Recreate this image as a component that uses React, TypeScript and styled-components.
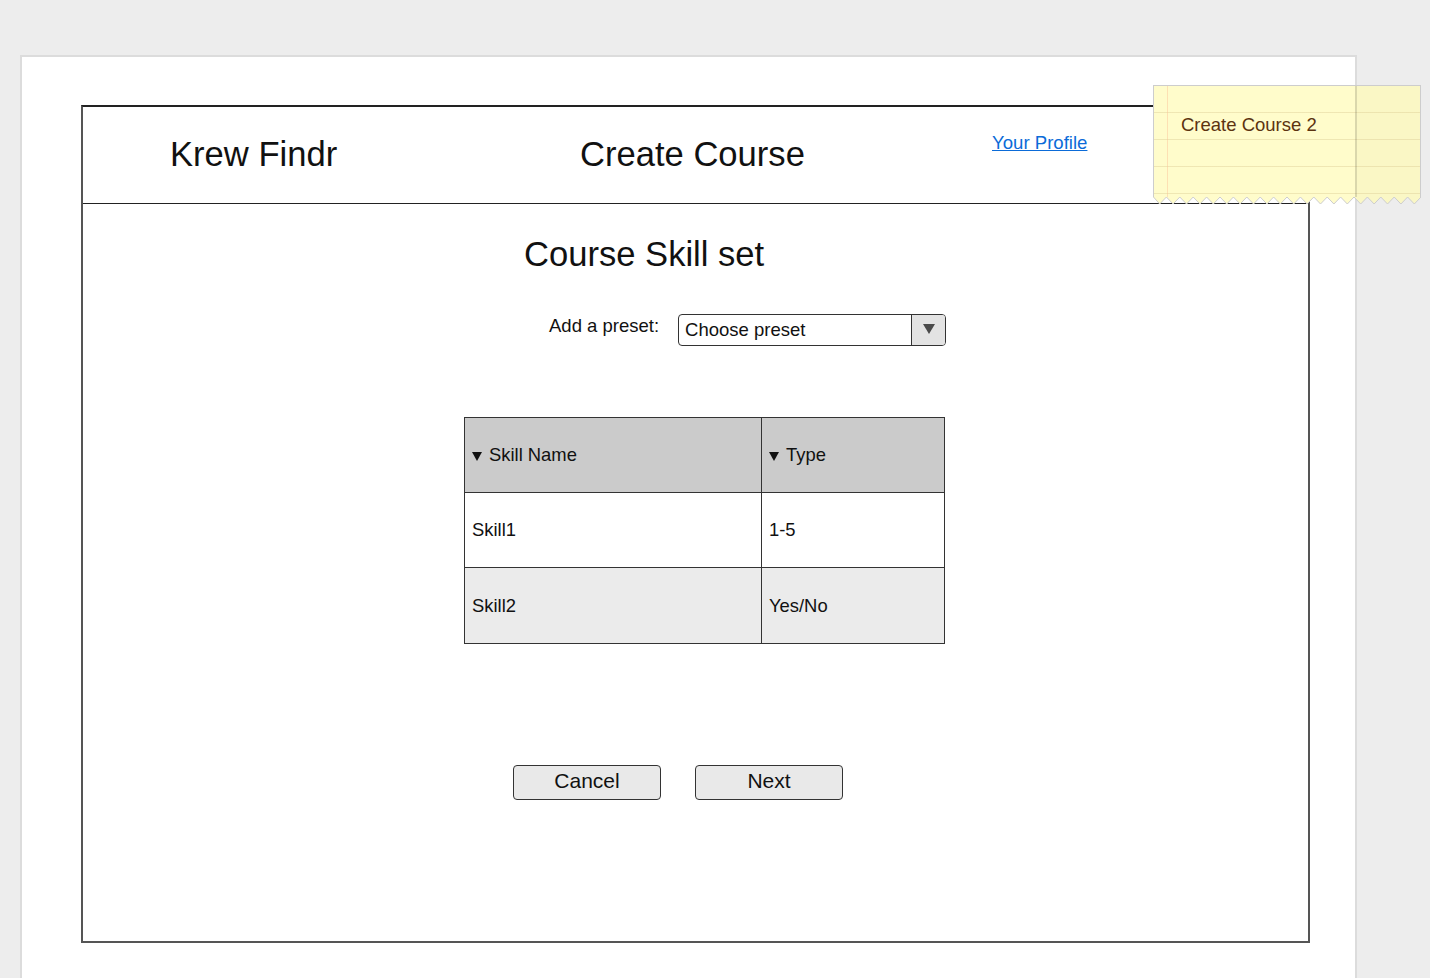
import * as React from "react";
import styled, { createGlobalStyle } from "styled-components";

const GlobalStyle = createGlobalStyle`
  html, body {
    margin: 0;
    padding: 0;
    background: #ededed;
    overflow: hidden;
    font-family: "Liberation Sans", Arial, sans-serif;
    color: #111;
  }
`;

const Canvas = styled.div`
  position: relative;
  box-sizing: border-box;
  margin: 55px 0 0 20px;
  width: 1337px;
  height: calc(100vh - 55px);
  background: #fff;
  border: 2px solid #dcdcdc;
  border-bottom: none;
  padding: 48px 0 0 59px;
`;

const Frame = styled.div`
  box-sizing: border-box;
  width: 1229px;
  height: 838px;
  border: 2px solid #555;
  border-top-color: #222;
  display: flex;
  flex-direction: column;
`;

const Header = styled.div`
  box-sizing: border-box;
  height: 97px;
  border-bottom: 1px solid #222;
  display: grid;
  grid-template-columns: 410px 412px 1fr;
  padding: 27px 0 0 87px;
`;

const BigTitle = styled.div`
  font-size: 34.6px;
  line-height: 40px;
  white-space: nowrap;
`;

const ProfileLink = styled.a`
  font-size: 18.6px;
  line-height: 21px;
  color: #0b6bd8;
  text-decoration: underline;
  white-space: nowrap;
`;

const LinkBox = styled.div`
  margin-top: -2px;
`;

const Body = styled.div`
  display: flex;
  flex-direction: column;
  align-items: flex-start;
`;

const SectionTitle = styled(BigTitle)`
  margin: 30px 0 0 441px;
`;

const PresetRow = styled.div`
  display: flex;
  align-items: center;
  margin: 40px 0 0 466px;
  gap: 19px;
`;

const Label = styled.span`
  font-size: 18.5px;
  margin-top: -8px;
`;

const Select = styled.div`
  box-sizing: border-box;
  width: 268px;
  height: 32px;
  border: 1px solid #333;
  border-radius: 4px;
  display: flex;
  overflow: hidden;
`;

const SelectText = styled.div`
  flex: 1;
  padding-left: 6px;
  font-size: 18.5px;
  line-height: 30px;
`;

const SelectArrow = styled.div`
  width: 33px;
  background: #e3e3e3;
  border-left: 1px solid #333;
  display: flex;
  align-items: center;
  justify-content: center;

  &::after {
    content: "";
    border-left: 6px solid transparent;
    border-right: 6px solid transparent;
    border-top: 10px solid #4a4a4a;
    margin-top: -2px;
  }
`;

const Table = styled.div`
  box-sizing: border-box;
  margin: 71px 0 0 381px;
  width: 481px;
  border: 1px solid #333;
  display: grid;
  grid-template-columns: 296px 183px;
`;

const Cell = styled.div<{ $bg: string; $last?: boolean; $right?: boolean }>`
  box-sizing: border-box;
  height: 75px;
  background: ${(p) => p.$bg};
  border-bottom: ${(p) => (p.$last ? "none" : "1px solid #333")};
  border-left: ${(p) => (p.$right ? "1px solid #333" : "none")};
  display: flex;
  align-items: center;
  padding-left: 7px;
  font-size: 18.4px;
`;

const SortMark = styled.span`
  display: inline-block;
  border-left: 5px solid transparent;
  border-right: 5px solid transparent;
  border-top: 9px solid #111;
  margin: 3px 7px 0 0;
`;

const ButtonRow = styled.div`
  display: flex;
  gap: 34px;
  margin: 121px 0 0 430px;
`;

const Button = styled.div`
  box-sizing: border-box;
  width: 148px;
  height: 35px;
  border: 1px solid #333;
  border-radius: 4px;
  background: #e9e9e9;
  font-size: 21px;
  display: flex;
  align-items: center;
  justify-content: center;
  padding-bottom: 3px;
`;

const Note = styled.div`
  position: absolute;
  left: 1131px;
  top: 28px;
  width: 268px;
`;

/* the canvas edge (203px into the note) still shows faintly through the paper */
const NotePaper = styled.div`
  box-sizing: border-box;
  height: 112px;
  border: 1px solid #cdcdcd;
  border-bottom: none;
  background:
    linear-gradient(to right, transparent 13px, rgba(250, 190, 150, 0.45) 13px, rgba(250, 190, 150, 0.45) 14px, transparent 14px),
    linear-gradient(to right, transparent 201px, rgba(0, 0, 0, 0.13) 201px, rgba(0, 0, 0, 0.13) 203px, transparent 203px),
    repeating-linear-gradient(to bottom, transparent 0, transparent 26px, rgba(220, 205, 150, 0.45) 26px, rgba(220, 205, 150, 0.45) 27px),
    linear-gradient(to right, #fffccb 201px, #faf7c5 201px);
  padding: 28px 0 0 27px;
  font-size: 18.5px;
  color: #5c3310;
`;

const Zigzag = () => {
  const teeth = 20;
  const w = 268 / teeth;
  let pts = "0,0 ";
  for (let i = 0; i < teeth; i++) {
    pts += `${i * w + w / 2},7 ${(i + 1) * w},0 `;
  }
  return (
    <svg width="268" height="9" style={{ display: "block" }}>
      <defs>
        <linearGradient id="paper" x1="0" x2="268" gradientUnits="userSpaceOnUse">
          <stop offset="0.75" stopColor="#fffccb" />
          <stop offset="0.75" stopColor="#faf7c5" />
        </linearGradient>
      </defs>
      <polygon points={pts} fill="url(#paper)" />
      <polyline points={`0.5,0 ${pts.slice(4)}`} fill="none" stroke="#cdcdcd" strokeWidth="1" />
    </svg>
  );
};

const rows = [
  { name: "Skill1", type: "1-5", bg: "#fff" },
  { name: "Skill2", type: "Yes/No", bg: "#ebebeb" },
];

const App = () => (
  <>
    <GlobalStyle />
    <Canvas>
      <Frame>
        <Header>
          <BigTitle>Krew Findr</BigTitle>
          <BigTitle>Create Course</BigTitle>
          <LinkBox>
            <ProfileLink href="#">Your Profile</ProfileLink>
          </LinkBox>
        </Header>
        <Body>
          <SectionTitle>Course Skill set</SectionTitle>
          <PresetRow>
            <Label>Add a preset:</Label>
            <Select>
              <SelectText>Choose preset</SelectText>
              <SelectArrow />
            </Select>
          </PresetRow>
          <Table>
            <Cell $bg="#cbcbcb">
              <SortMark />
              Skill Name
            </Cell>
            <Cell $bg="#cbcbcb" $right>
              <SortMark />
              Type
            </Cell>
            {rows.map((r, i) => (
              <React.Fragment key={r.name}>
                <Cell $bg={r.bg} $last={i === rows.length - 1}>{r.name}</Cell>
                <Cell $bg={r.bg} $last={i === rows.length - 1} $right>{r.type}</Cell>
              </React.Fragment>
            ))}
          </Table>
          <ButtonRow>
            <Button>Cancel</Button>
            <Button>Next</Button>
          </ButtonRow>
        </Body>
      </Frame>
      <Note>
        <NotePaper>Create Course 2</NotePaper>
        <Zigzag />
      </Note>
    </Canvas>
  </>
);

export default App;
